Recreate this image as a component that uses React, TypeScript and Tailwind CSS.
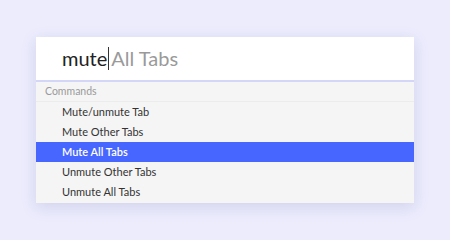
import { useState } from 'react'

const COMMANDS = [
  'Mute/unmute Tab',
  'Mute Other Tabs',
  'Mute All Tabs',
  'Unmute Other Tabs',
  'Unmute All Tabs',
]

export default function App() {
  const [selected] = useState(2)

  return (
    <div className="flex h-[240px] w-[450px] justify-center bg-[#ececfd] pt-[37px] font-['Lato',sans-serif]">
      <div className="h-[166px] w-[378px] bg-[#f5f5f5] shadow-[0_4px_14px_rgba(90,90,160,0.18)]">
        <div className="flex h-[45px] items-center border-b-2 border-[#d3d6f7] bg-white pl-[26px] pb-[1px]">
          <span className="text-[20px] text-[#222]">mute</span>
          <span className="ml-px mr-[2px] h-[23px] w-px bg-[#333]" />
          <span className="text-[20px] text-[#9a9a9a]">All Tabs</span>
        </div>
        <div className="flex h-[20px] items-center border-b border-[#ececec] pl-[9px] text-[10.5px] text-[#9a9a9a]">
          Commands
        </div>
        <ul>
          {COMMANDS.map((cmd, i) => (
            <li
              key={cmd}
              className={`flex h-[20px] items-center pl-[26px] text-[11px] ${
                i === selected ? 'bg-[#4766ff] font-semibold text-white' : 'text-[#333]'
              }`}
            >
              {cmd}
            </li>
          ))}
        </ul>
      </div>
    </div>
  )
}
